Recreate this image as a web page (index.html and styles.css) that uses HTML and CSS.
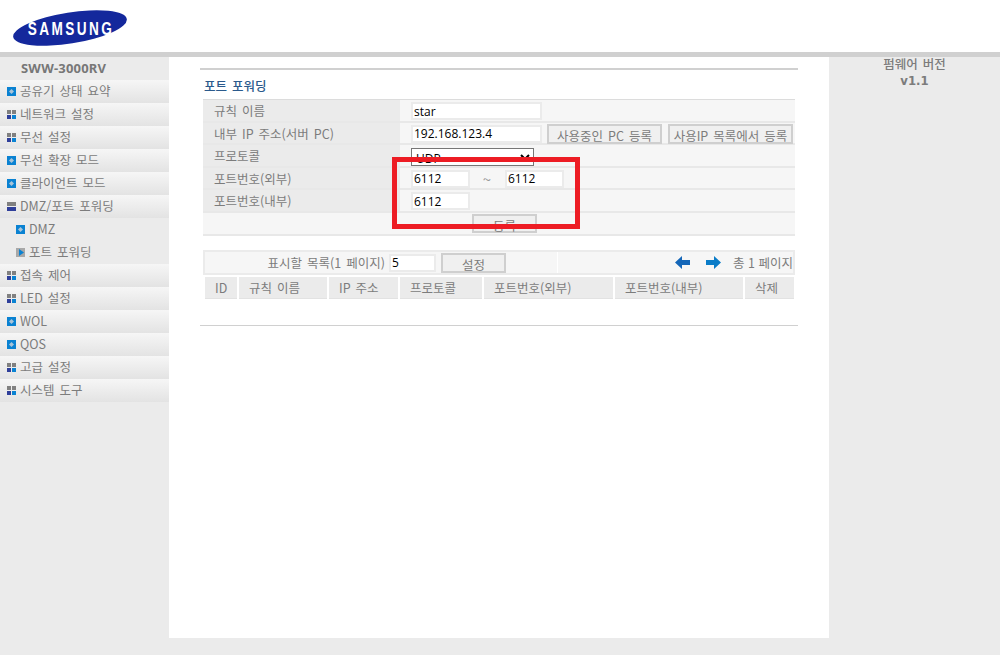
FILE: index.html
```html
<!DOCTYPE html>
<html lang="ko">
<head>
<meta charset="utf-8">
<title>포트 포워딩</title>
<link rel="stylesheet" href="styles.css">
</head>
<body>
<svg class="defs" width="0" height="0">
  <symbol id="i-leaf" viewBox="0 0 9 9"><rect width="9" height="9" fill="#0a82d2"/><path d="M4.5 2 7 4.5 4.5 7 2 4.5z" fill="#a9c4d8"/></symbol>
  <symbol id="i-grid" viewBox="0 0 9 9"><rect width="4" height="4" fill="#808080"/><rect x="5" width="4" height="4" fill="#808080"/><rect y="5" width="4" height="4" fill="#2f3f9a"/><rect x="5" y="5" width="4" height="4" fill="#0a82d2"/></symbol>
  <symbol id="i-open" viewBox="0 0 9 9"><rect width="9" height="4" fill="#808080"/><rect y="5" width="9" height="4" fill="#2f3f9a"/></symbol>
  <symbol id="i-cur" viewBox="0 0 9 9"><rect width="9" height="9" fill="#a8a8a8"/><path d="M3 1 8 4.5 3 8z" fill="#0a82d2"/></symbol>
</svg>
<header class="top">
  <svg class="logo" width="114" height="38" viewBox="0 0 114 38">
    <ellipse cx="57" cy="19" rx="57.5" ry="15.5" transform="rotate(-9 57 19)" fill="#14289c"/>
    <text class="logo-text" transform="translate(58 25.5) scale(.8 1.05)" text-anchor="middle">SAMSUNG</text>
  </svg>
</header>
<div class="bar"></div>
<div class="main">
  <nav class="side">
    <div class="model">SWW-3000RV</div>
    <a class="item"><svg class="ic"><use href="#i-leaf"/></svg>공유기 상태 요약</a>
    <a class="item"><svg class="ic"><use href="#i-grid"/></svg>네트워크 설정</a>
    <a class="item"><svg class="ic"><use href="#i-grid"/></svg>무선 설정</a>
    <a class="item"><svg class="ic"><use href="#i-leaf"/></svg>무선 확장 모드</a>
    <a class="item"><svg class="ic"><use href="#i-leaf"/></svg>클라이언트 모드</a>
    <a class="item"><svg class="ic"><use href="#i-open"/></svg>DMZ/포트 포워딩</a>
    <a class="sub"><svg class="ic"><use href="#i-leaf"/></svg>DMZ</a>
    <a class="sub"><svg class="ic"><use href="#i-cur"/></svg>포트 포워딩</a>
    <a class="item"><svg class="ic"><use href="#i-grid"/></svg>접속 제어</a>
    <a class="item"><svg class="ic"><use href="#i-grid"/></svg>LED 설정</a>
    <a class="item"><svg class="ic"><use href="#i-leaf"/></svg>WOL</a>
    <a class="item"><svg class="ic"><use href="#i-leaf"/></svg>QOS</a>
    <a class="item"><svg class="ic"><use href="#i-grid"/></svg>고급 설정</a>
    <a class="item"><svg class="ic"><use href="#i-grid"/></svg>시스템 도구</a>
  </nav>
  <main class="content">
    <div class="topline"></div>
    <h1 class="title">포트 포워딩</h1>
    <div class="form">
      <div class="row"><div class="lab">규칙 이름</div><div class="val"><input class="inp wide" value="star"></div></div>
      <div class="row"><div class="lab">내부 IP 주소(서버 PC)</div><div class="val"><input class="inp wide" value="192.168.123.4"><button class="btn b1">사용중인 PC 등록</button><button class="btn b2">사용IP 목록에서 등록</button></div></div>
      <div class="row"><div class="lab">프로토콜</div><div class="val"><select class="sel"><option>UDP</option></select></div></div>
      <div class="row"><div class="lab">포트번호(외부)</div><div class="val"><input class="inp port" value="6112"><span class="tilde">~</span><input class="inp port" value="6112"></div></div>
      <div class="row"><div class="lab">포트번호(내부)</div><div class="val"><input class="inp port" value="6112"></div></div>
      <div class="row last"><button class="btn reg">등록</button></div>
    </div>
    <div class="pager">
      <div class="pg-left"><span>표시할 목록(1 페이지)</span><input class="inp num" value="5"><button class="btn set">설정</button></div>
      <div class="pg-right">
        <svg class="arrow al" width="16" height="13" viewBox="0 0 16 13"><path d="M0 6.5 7 0V4H15V9H7V13z" fill="#1466b8"/></svg>
        <svg class="arrow" width="15" height="13" viewBox="0 0 15 13"><path d="M15 6.5 8 0V4H0V9H8V13z" fill="#0a7cc8"/></svg>
        <span class="total">총 1 페이지</span>
      </div>
    </div>
    <div class="thead">
      <div class="th c1">ID</div><div class="th c2">규칙 이름</div><div class="th c3">IP 주소</div><div class="th c4">프로토콜</div><div class="th c5">포트번호(외부)</div><div class="th c6">포트번호(내부)</div><div class="th c7">삭제</div>
    </div>
    <div class="rule"></div>
    <div class="mark"></div>
  </main>
  <aside class="fw"><div class="fw-l">펌웨어 버전</div><div class="fw-v">v1.1</div></aside>
</div>
</body>
</html>
```
FILE: styles.css
```css
* { box-sizing: border-box; }
html, body { margin: 0; height: 655px; overflow: hidden; }
body { background: #ebebeb; font: 12.5px "Noto Sans CJK KR", "Noto Sans", sans-serif; color: #7c7c7c; word-spacing: 1.5px; }
.defs { position: absolute; }
.top { height: 52px; background: #fff; padding: 9px 0 0 13px; }
.logo { display: block; }
.logo-text { font: bold 17px "Liberation Sans", sans-serif; letter-spacing: 3px; fill: #fff; word-spacing: 0; }
.bar { height: 5px; background: #d0d0d0; }
.main { display: flex; height: 581px; }
.side { width: 169px; flex: none; }
.model { height: 23px; padding-left: 21px; font: bold 13px/23px "Noto Sans", sans-serif; letter-spacing: .2px; color: #777; }
.item, .sub { display: flex; align-items: center; height: 23px; padding-bottom: 2px; line-height: 21px; white-space: nowrap; }
.item { padding-left: 7px; background: linear-gradient(#f6f6f6, #e3e3e3); }
.sub { padding-left: 16px; }
.ic { width: 9px; height: 9px; margin: 2px 4px 0 0; flex: none; }
.content { position: relative; width: 660px; flex: none; background: #fff; padding: 11px 0 0; }
.topline { height: 2px; margin-left: 31px; width: 598px; background: #d0d0d0; }
.title { margin: 0; padding: 8px 0 0 35px; height: 29px; font-size: 12.5px; line-height: 15px; font-weight: 500; color: #2b5a8c; }
.form { margin-left: 34px; width: 592px; border-top: 1px solid #dcdcdc; background: #f6f6f6; }
.row { display: flex; height: 22.5px; border-bottom: 2px solid #e8e8e8; }
.lab { width: 197px; margin-right: 1px; background: #ebebeb; padding-left: 11px; line-height: 22px; }
.val { display: flex; align-items: center; padding: 1.5px 0 0 10px; flex: 1; }
.inp { height: 18px; padding: 0 1px; border: 2px solid #ebebeb; background: #fff; font: 12px "Open Sans", sans-serif; color: #000; outline: 0; }
.wide { width: 131px; }
.port { width: 59px; }
.tilde { width: 34px; margin-right: 1px; text-align: center; font-size: 15px; line-height: 20px; color: #999; }
.num { width: 47px; margin: 0 5px 0 4px; }
.btn { height: 20px; padding: 0; background: #f0f0f0; border: 2px solid #cfcfcf; font: 12.5px "Noto Sans CJK KR", sans-serif; color: #7c7c7c; word-spacing: 1.5px; }
.b1 { width: 115px; margin-left: 5px; }
.b2 { width: 125px; margin-left: 6px; }
.sel { width: 123px; height: 18px; margin-top: 2px; background: #fff; border: 1px solid #767676; font: 12px "Open Sans", sans-serif; color: #000; padding: 0; }
.last { justify-content: center; align-items: center; height: 23px; }
.reg { width: 65px; height: 19px; margin-left: 11px; }
.pager { display: flex; margin: 14.5px 0 0 34px; width: 592px; height: 25px; border: 2px solid #ebebeb; background: #f6f6f6; align-items: center; }
.pg-left { display: flex; align-items: center; justify-content: flex-end; width: 353px; height: 100%; padding-right: 51px; border-right: 1px solid #fff; }
.set { width: 65px; height: 20px; }
.pg-right { display: flex; align-items: center; flex: 1; padding-left: 117px; }
.arrow { flex: none; }
.al { margin-right: 15px; }
.total { margin-left: 12px; white-space: nowrap; word-spacing: 0; }
.thead { display: flex; gap: 2px; margin: 2px 0 0 36px; height: 22px; }
.th { background: #ebebeb; border-bottom: 1px solid #e2e2e2; padding-left: 10px; line-height: 21px; white-space: nowrap; }
.c1 { width: 32px; } .c2 { width: 88px; } .c3 { width: 69px; } .c4 { width: 82px; } .c5 { width: 129px; } .c6 { width: 128px; } .c7 { width: 49px; }
.rule { margin: 26px 0 0 31px; width: 598px; height: 1px; background: #d0d0d0; }
.mark { position: absolute; left: 223px; top: 100px; width: 188px; height: 72px; border: 5px solid #ed1c24; }
.fw { flex: 1; text-align: center; }
.fw-l { font-weight: 500; line-height: 14px; }
.fw-v { font: bold 11.7px/20px "DejaVu Sans", sans-serif; }
```
